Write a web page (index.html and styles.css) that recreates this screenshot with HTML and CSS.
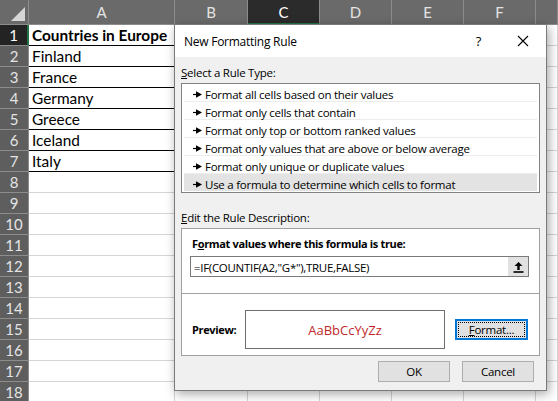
FILE: index.html
```html
<!DOCTYPE html>
<html>
<head>
<meta charset="utf-8">
<link rel="stylesheet" href="styles.css">
</head>
<body>
<div class="sheet">
  <div class="corner"><span class="tri"></span></div>
  <div class="ch">A</div><div class="ch">B</div><div class="ch sel">C</div><div class="ch">D</div><div class="ch">E</div><div class="ch">F</div><div class="ch"></div>

  <div class="rh sel">1</div><div class="c t b">Countries in Europe</div><div class="c"></div><div class="c"></div><div class="c"></div><div class="c"></div><div class="c"></div><div class="c"></div>
  <div class="rh">2</div><div class="c t">Finland</div><div class="c"></div><div class="c"></div><div class="c"></div><div class="c"></div><div class="c"></div><div class="c"></div>
  <div class="rh">3</div><div class="c t">France</div><div class="c"></div><div class="c"></div><div class="c"></div><div class="c"></div><div class="c"></div><div class="c"></div>
  <div class="rh">4</div><div class="c t">Germany</div><div class="c"></div><div class="c"></div><div class="c"></div><div class="c"></div><div class="c"></div><div class="c"></div>
  <div class="rh">5</div><div class="c t">Greece</div><div class="c"></div><div class="c"></div><div class="c"></div><div class="c"></div><div class="c"></div><div class="c"></div>
  <div class="rh">6</div><div class="c t">Iceland</div><div class="c"></div><div class="c"></div><div class="c"></div><div class="c"></div><div class="c"></div><div class="c"></div>
  <div class="rh">7</div><div class="c t">Italy</div><div class="c"></div><div class="c"></div><div class="c"></div><div class="c"></div><div class="c"></div><div class="c"></div>
  <div class="rh">8</div><div class="c"></div><div class="c"></div><div class="c"></div><div class="c"></div><div class="c"></div><div class="c"></div><div class="c"></div>
  <div class="rh">9</div><div class="c"></div><div class="c"></div><div class="c"></div><div class="c"></div><div class="c"></div><div class="c"></div><div class="c"></div>
  <div class="rh">10</div><div class="c"></div><div class="c"></div><div class="c"></div><div class="c"></div><div class="c"></div><div class="c"></div><div class="c"></div>
  <div class="rh">11</div><div class="c"></div><div class="c"></div><div class="c"></div><div class="c"></div><div class="c"></div><div class="c"></div><div class="c"></div>
  <div class="rh">12</div><div class="c"></div><div class="c"></div><div class="c"></div><div class="c"></div><div class="c"></div><div class="c"></div><div class="c"></div>
  <div class="rh">13</div><div class="c"></div><div class="c"></div><div class="c"></div><div class="c"></div><div class="c"></div><div class="c"></div><div class="c"></div>
  <div class="rh">14</div><div class="c"></div><div class="c"></div><div class="c"></div><div class="c"></div><div class="c"></div><div class="c"></div><div class="c"></div>
  <div class="rh">15</div><div class="c"></div><div class="c"></div><div class="c"></div><div class="c"></div><div class="c"></div><div class="c"></div><div class="c"></div>
  <div class="rh">16</div><div class="c"></div><div class="c"></div><div class="c"></div><div class="c"></div><div class="c"></div><div class="c"></div><div class="c"></div>
  <div class="rh">17</div><div class="c"></div><div class="c"></div><div class="c"></div><div class="c"></div><div class="c"></div><div class="c"></div><div class="c"></div>
  <div class="rh">18</div><div class="c"></div><div class="c"></div><div class="c"></div><div class="c"></div><div class="c"></div><div class="c"></div><div class="c"></div>
</div>

<div class="dialog">
  <div class="titlebar">
    <span class="title">New Formatting Rule</span>
    <span class="help">?</span>
    <svg class="close" width="12" height="12" viewBox="0 0 12 12"><path d="M1 1L11 11M11 1L1 11" stroke="#000" stroke-width="1.1" fill="none"/></svg>
  </div>
  <div class="body">
    <div class="label"><u>S</u>elect a Rule Type:</div>
    <div class="list">
      <div class="item"><svg class="arr" width="9" height="7" viewBox="0 0 9 7"><path d="M0 3.5H4" stroke="#000" stroke-width="1.2"/><path d="M3 0.3L9 3.5L3 6.7Z" fill="#000"/></svg>Format all cells based on their values</div>
      <div class="item"><svg class="arr" width="9" height="7" viewBox="0 0 9 7"><path d="M0 3.5H4" stroke="#000" stroke-width="1.2"/><path d="M3 0.3L9 3.5L3 6.7Z" fill="#000"/></svg>Format only cells that contain</div>
      <div class="item"><svg class="arr" width="9" height="7" viewBox="0 0 9 7"><path d="M0 3.5H4" stroke="#000" stroke-width="1.2"/><path d="M3 0.3L9 3.5L3 6.7Z" fill="#000"/></svg>Format only top or bottom ranked values</div>
      <div class="item"><svg class="arr" width="9" height="7" viewBox="0 0 9 7"><path d="M0 3.5H4" stroke="#000" stroke-width="1.2"/><path d="M3 0.3L9 3.5L3 6.7Z" fill="#000"/></svg>Format only values that are above or below average</div>
      <div class="item"><svg class="arr" width="9" height="7" viewBox="0 0 9 7"><path d="M0 3.5H4" stroke="#000" stroke-width="1.2"/><path d="M3 0.3L9 3.5L3 6.7Z" fill="#000"/></svg>Format only unique or duplicate values</div>
      <div class="item selected"><svg class="arr" width="9" height="7" viewBox="0 0 9 7"><path d="M0 3.5H4" stroke="#000" stroke-width="1.2"/><path d="M3 0.3L9 3.5L3 6.7Z" fill="#000"/></svg>Use a formula to determine which cells to format</div>
    </div>
    <div class="label second"><u>E</u>dit the Rule Description:</div>
    <div class="desc">
      <div class="top">
        <div class="boldlabel">F<u>o</u>rmat values where this formula is true:</div>
        <div class="formula">
          <span class="ftext">=IF(COUNTIF(A2,"G*"),TRUE,FALSE)</span>
          <span class="pick"><svg width="11" height="12" viewBox="0 0 11 12"><path d="M5.5 1L1.5 5H4.3V9H6.7V5H9.5Z" fill="#000"/><rect x="0.5" y="10.2" width="10" height="1.6" fill="#000"/></svg></span>
        </div>
      </div>
      <div class="bottom">
        <span class="boldlabel plabel">Preview:</span>
        <div class="preview">AaBbCcYyZz</div>
        <div class="btn fmt"><span class="inner"><u>F</u>ormat...</span></div>
      </div>
    </div>
    <div class="actions">
      <div class="btn">OK</div>
      <div class="btn">Cancel</div>
    </div>
  </div>
</div>
</body>
</html>
```

FILE: styles.css
```css
* { box-sizing: border-box; }
html, body { margin: 0; padding: 0; }
body {
  width: 558px;
  height: 401px;
  overflow: hidden;
  position: relative;
  background: #fff;
  font-family: "Lato", "Liberation Sans", sans-serif;
}
.sheet {
  display: grid;
  grid-template-columns: 29px 146px 73px 72px 72px 72px 72px 22px;
  grid-template-rows: 25px repeat(18, 21px);
}
.corner {
  background: #6a6a6a;
  border-right: 1px solid #8c8c8c;
  border-bottom: 1px solid #8c8c8c;
  position: relative;
}
.tri {
  position: absolute;
  right: 3px;
  bottom: 3px;
  width: 0;
  height: 0;
  border-left: 14px solid transparent;
  border-bottom: 14px solid #d6d6d6;
}
.ch {
  background: #6a6a6a;
  color: #e4e4e4;
  font-size: 15px;
  display: flex;
  align-items: center;
  justify-content: center;
  border-right: 1px solid #8c8c8c;
  border-bottom: 1px solid #8c8c8c;
}
.ch.sel {
  background: #2b2b2b;
  color: #fff;
  border-bottom: 2px solid #217346;
}
.rh {
  background: #5e5e5e;
  color: #e4e4e4;
  font-size: 15px;
  display: flex;
  align-items: center;
  justify-content: center;
  border-right: 1px solid #8c8c8c;
  border-bottom: 1px solid #8c8c8c;
}
.rh.sel {
  background: #232323;
  color: #fff;
  border-right: 2px solid #217346;
}
.c {
  border-right: 1px solid #d4d4d4;
  border-bottom: 1px solid #d4d4d4;
  font-size: 15.4px;
  color: #000;
  padding-left: 3px;
  display: flex;
  align-items: center;
  white-space: nowrap;
}
.c.t { border-bottom: 1px solid #000; }
.c.b { font-weight: bold; }

.dialog {
  position: absolute;
  left: 174px;
  top: 24px;
  width: 373px;
  height: 367px;
  border: 1px solid #7a7a7a;
  background: #f0f0f0;
  box-shadow: 2px 3px 10px rgba(0,0,0,0.35);
  font-family: "Open Sans", "Noto Sans", sans-serif;
  font-size: 11.5px;
  letter-spacing: -0.25px;
  color: #000;
  display: flex;
  flex-direction: column;
}
.titlebar {
  height: 32px;
  background: #fff;
  display: flex;
  align-items: center;
  padding-left: 9px;
}
.title { font-size: 12px; flex: 1; }
.help { font-size: 13px; margin-right: 36px; }
.close { margin-right: 17px; }
.body {
  flex: 1;
  padding: 8px 6px 0 6px;
  display: flex;
  flex-direction: column;
}
.label { line-height: 16px; height: 16px; }
.label.second { margin-top: 17px; }
.list {
  margin-top: 2px;
  height: 110px;
  background: #fff;
  border: 1px solid #828282;
  padding: 0 2px;
}
.item {
  height: 18px;
  display: flex;
  align-items: center;
  border-bottom: 1px solid #ececec;
  padding-left: 9px;
  padding-top: 3px;
  white-space: nowrap;
}
.item:last-child { border-bottom: none; height: 17px; }
.item.selected { background: #e3e3e3; }
.arr { margin-right: 3px; flex: none; }
.desc {
  margin-top: 2px;
  height: 128px;
  background: #fff;
  border: 1px solid #a0a0a0;
  display: flex;
  flex-direction: column;
}
.top {
  height: 65px;
  border-bottom: 1px solid #a0a0a0;
  padding: 7px 10px 0 8px;
}
.boldlabel {
  font-weight: bold;
  font-size: 11px;
  letter-spacing: -0.35px;
  line-height: 16px;
  padding-left: 2px;
}
.formula {
  margin-top: 4px;
  height: 21px;
  border: 1px solid #7a7a7a;
  display: flex;
  align-items: center;
  padding-left: 3px;
}
.ftext { flex: 1; white-space: nowrap; letter-spacing: -0.3px; padding-top: 1px; }
.pick {
  width: 20px;
  height: 19px;
  background: #e1e1e1;
  display: flex;
  align-items: center;
  justify-content: center;
}
.bottom {
  flex: 1;
  display: flex;
  align-items: center;
  padding: 10px 11px 0 8px;
}
.plabel { width: 55px; flex: none; }
.preview {
  width: 200px;
  height: 39px;
  border: 1px solid #6e6e6e;
  display: flex;
  align-items: center;
  justify-content: center;
  color: #c0282b;
  font-size: 13px;
  letter-spacing: 0;
}
.btn {
  width: 72px;
  height: 21px;
  background: #e1e1e1;
  border: 1px solid #adadad;
  display: flex;
  align-items: center;
  justify-content: center;
}
.btn.fmt {
  margin-left: 10px;
  width: 73px;
  border: 2px solid #0078d7;
  padding: 1px;
}
.btn.fmt .inner {
  flex: 1;
  align-self: stretch;
  display: flex;
  align-items: center;
  justify-content: center;
  border: 1px dotted #000;
}
.actions {
  display: flex;
  justify-content: flex-end;
  gap: 12px;
  margin-top: 5px;
  padding-right: 6px;
}
```
